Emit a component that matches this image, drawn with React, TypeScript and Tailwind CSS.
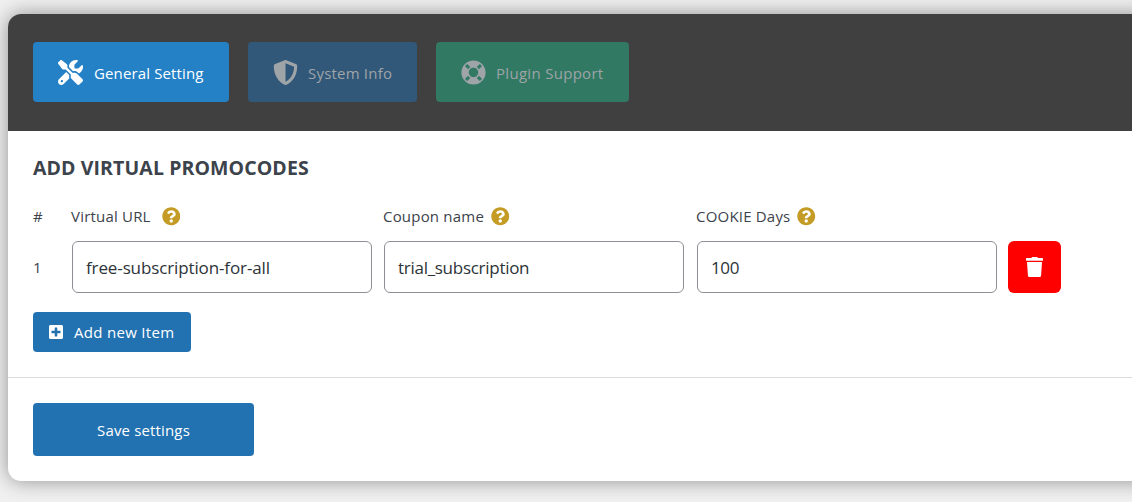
import type { ReactNode } from 'react';
import { FaShieldAlt, FaLifeRing, FaQuestionCircle, FaPlusSquare } from 'react-icons/fa';
import { FaScrewdriverWrench } from 'react-icons/fa6';

function Label({ children, help }: { children: ReactNode; help: string }) {
  return (
    <div className="flex h-6 items-center whitespace-nowrap text-[15px] text-[#3c434a]">
      <span className={`-mt-0.5 ${help}`}>{children}</span>
      <FaQuestionCircle className="-mt-px size-[18.5px] text-[#c39b25]" />
    </div>
  );
}

function Field({ value, tracking }: { value: string; tracking: string }) {
  return (
    <input
      defaultValue={value}
      className={`h-[52px] w-[300px] rounded-[6px] border border-[#8c8f94] bg-white px-[13px] text-[17px] text-[#2c3338] outline-none ${tracking}`}
    />
  );
}

function TrashIcon() {
  return (
    <svg viewBox="0 0 17 20" className="h-5 w-[17px]" fill="currentColor">
      <path d="M6 0h5.3l.6 1.1H16.4q.6 0 .6.6v2H0v-2q0-.6.6-.6H5.4zM1 4.9h15l-.9 13.5q-.1 1.6-1.6 1.6h-10q-1.500 0-1.600-1.600z" />
    </svg>
  );
}

export default function App() {
  return (
    <div className="h-[502px] overflow-hidden bg-[#f0f0f1] pt-3.5 pl-2 font-['Open_Sans',sans-serif]">
      <main className="h-[467px] w-[1180px] overflow-hidden rounded-[13px] bg-white shadow-[0_0_20px_rgba(0,0,0,0.4)]">
        <nav className="flex h-[117px] gap-[19px] bg-[#404040] pt-7 pl-[25px] text-[15px] text-white">
          <button className="flex h-[60px] w-[196px] items-center rounded-[4px] bg-[#2481c6] pl-[25px]">
            <FaScrewdriverWrench className="size-[25px]" />
            <span className="ml-[11px] whitespace-nowrap pt-[3px] tracking-[0.13px]">General Setting</span>
          </button>
          <button className="flex h-[60px] w-[169px] items-center rounded-[4px] bg-[#315879] pl-[25px] text-[#9fa4a8]">
            <FaShieldAlt className="size-[25px]" />
            <span className="ml-[10px] whitespace-nowrap pt-[3px] tracking-[0.2px]">System Info</span>
          </button>
          <button className="flex h-[60px] w-[193px] items-center rounded-[4px] bg-[#317963] pl-[25px] text-[#9fa4a8]">
            <FaLifeRing className="size-[25px]" />
            <span className="ml-[10px] whitespace-nowrap pt-[3px] tracking-[0.3px]">Plugin Support</span>
          </button>
        </nav>
        <section className="h-[247px] border-b border-[#dcdcde] pt-[23px] pl-[25px]">
          <h1 className="h-7 text-[19.5px] leading-7 font-bold tracking-[0.1px] text-[#3c434a]">ADD VIRTUAL PROMOCODES</h1>
          <div className="mt-[23px] grid grid-cols-[38px_312px_313px_300px]">
            <span className="-mt-px text-[15px] leading-6 text-[#3c434a]">#</span>
            <Label help="mr-[11px] tracking-[0.2px]">Virtual URL</Label>
            <Label help="mr-[7px] tracking-[0.2px]">Coupon name</Label>
            <Label help="mr-[7px] tracking-[0.2px]">COOKIE Days</Label>
          </div>
          <div className="mt-3 flex items-center">
            <span className="w-[39px] text-[15px] text-[#3c434a]">1</span>
            <Field value="free-subscription-for-all" tracking="tracking-[-0.12px]" />
            <span className="w-3" />
            <Field value="trial_subscription" tracking="tracking-[-0.28px]" />
            <span className="w-[13px]" />
            <Field value="100" tracking="tracking-[-0.4px]" />
            <button aria-label="Delete" className="ml-[11px] flex h-[52px] w-[53px] items-center justify-center rounded-[6px] bg-[#ff0000] text-white">
              <TrashIcon />
            </button>
          </div>
          <button className="mt-[19px] flex h-10 w-[158px] items-center rounded-[4px] bg-[#2271b1] pl-[15px] text-[15px] text-white">
            <FaPlusSquare className="size-4" />
            <span className="ml-[10px] whitespace-nowrap tracking-[0.3px]">Add new Item</span>
          </button>
        </section>
        <footer className="pt-[25px] pl-[25px]">
          <button className="flex h-[53px] w-[221px] items-center justify-center rounded-[4px] bg-[#2271b1] pt-px text-[15px] tracking-[0.15px] text-white">Save settings</button>
        </footer>
      </main>
    </div>
  );
}
